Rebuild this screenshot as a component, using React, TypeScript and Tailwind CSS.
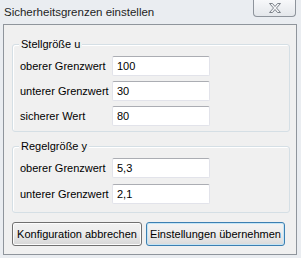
import React from 'react';

const font = { fontFamily: '"Liberation Sans", Arial, sans-serif' };

interface FieldRowProps {
  label: string;
  value: string;
}

const FieldRow: React.FC<FieldRowProps> = ({ label, value }) => (
  <div className="flex items-center h-[20px]">
    <span className="w-[92px] shrink-0 text-[11px] text-black leading-none">{label}</span>
    <div className="w-[98px] h-[20px] bg-white border border-[#e2e3ea] border-t-[#abadb3] rounded-[2px] flex items-center pl-[4px] text-[11px] text-black leading-none">
      {value}
    </div>
  </div>
);

interface GroupProps {
  title: string;
  gap: string;
  bottom: string;
  children: React.ReactNode;
}

const Group: React.FC<GroupProps> = ({ title, gap, bottom, children }) => (
  <div className={`relative border border-[#d5dfe5] rounded-[3px] shadow-[inset_1px_1px_0_#ffffff] pl-[7px] pt-[11px] flex flex-col ${gap} ${bottom}`}>
    <span className="absolute -top-[7px] left-[6px] bg-[#f0f0f0] px-[2px] text-[11px] leading-[13px] text-black">
      {title}
    </span>
    {children}
  </div>
);

export default function App() {
  return (
    <div className="w-[301px] h-[258px] bg-[#eaedf1] flex flex-col" style={font}>
      <div className="h-[24px] flex items-start justify-between shrink-0">
        <span className="pl-[4px] pt-[5px] text-[11.5px] leading-[14px] text-[#1e1e1e]">Sicherheitsgrenzen einstellen</span>
        <div className="mr-[5px] w-[43px] h-[17px] rounded-b-[4px] border border-t-0 border-[#8e949c] bg-gradient-to-b from-[#f7f8fa] to-[#e4e7eb] flex items-center justify-center">
          <svg width="14" height="12" viewBox="0 0 14 12">
            <path
              d="M1.5 1.5h3l2.5 3 2.5-3h3l-4 4.5 4 4.5h-3L7 7.5l-2.5 3h-3l4-4.5z"
              fill="#f4f5f7"
              stroke="#7d838b"
              strokeWidth="1"
              strokeLinejoin="round"
            />
          </svg>
        </div>
      </div>
      <div className="ml-[3px] mr-[4px] mb-[3px] flex-1 bg-[#f0f0f0] border border-[#8f959c] pt-[19px] pl-[8px] pr-[6px] flex flex-col">
        <Group title="Stellgröße u" gap="gap-[5px]" bottom="pb-[5px]">
          <FieldRow label="oberer Grenzwert" value="100" />
          <FieldRow label="unterer Grenzwert" value="30" />
          <FieldRow label="sicherer Wert" value="80" />
        </Group>
        <div className="mt-[14px]">
          <Group title="Regelgröße y" gap="gap-[6px]" bottom="pb-[8px]">
            <FieldRow label="oberer Grenzwert" value="5,3" />
            <FieldRow label="unterer Grenzwert" value="2,1" />
          </Group>
        </div>
        <div className="mt-[9px] flex gap-[4px]">
          <button className="w-[130px] h-[24px] rounded-[3px] border border-[#707070] shadow-[inset_0_0_0_1px_#fcfcfc] bg-gradient-to-b from-[#f2f2f2] via-[#ebebeb] to-[#d6d6d6] text-[11px] text-black leading-none">
            Konfiguration abbrechen
          </button>
          <button className="w-[139px] h-[24px] rounded-[3px] border border-[#3c7fb1] shadow-[inset_0_0_0_1px_#c4e5f6] bg-gradient-to-b from-[#f4f4f4] via-[#ececec] to-[#dadada] text-[11px] text-black leading-none">
            Einstellungen übernehmen
          </button>
        </div>
      </div>
    </div>
  );
}
